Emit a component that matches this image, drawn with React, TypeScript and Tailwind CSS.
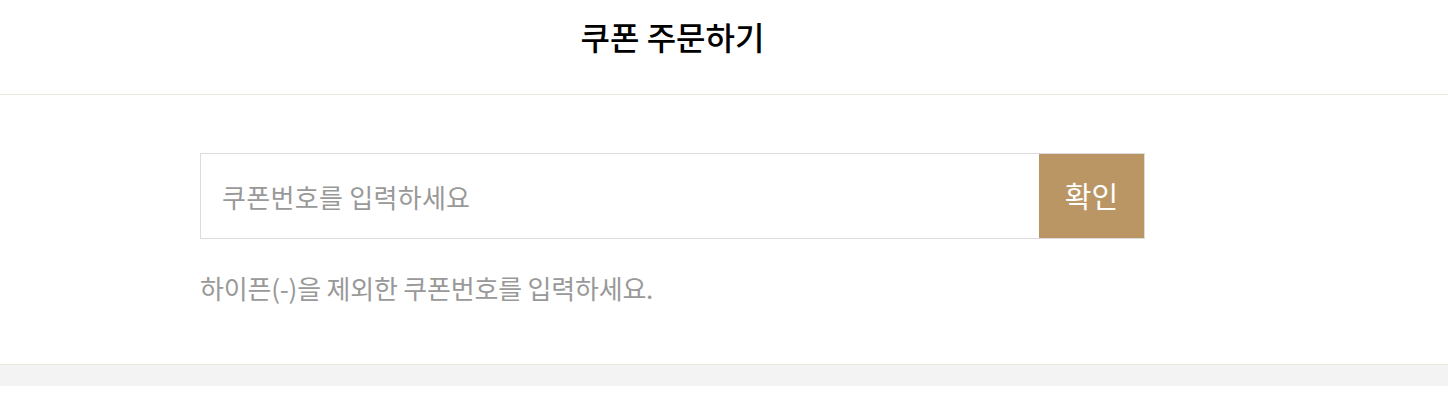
const font = { fontFamily: '"Noto Sans CJK KR", "Noto Sans", sans-serif' };

const App = () => {
  return (
    <div className="w-[1448px] h-[406px] bg-white" style={font}>
      <header className="h-[95px] border-b border-[#ebe7df] flex items-start">
        <div className="ml-[200px] w-[945px] pt-[13px] text-center">
          <h1 className="text-[32px] leading-[46px] font-medium text-black">쿠폰 주문하기</h1>
        </div>
      </header>

      <section className="pt-[58px] h-[269px]">
        <div className="ml-[200px] w-[945px]">
          <div className="flex h-[86px] border border-[#dcdcdc]">
            <input
              type="text"
              placeholder="쿠폰번호를 입력하세요"
              className="flex-1 px-[21px] text-[26px] tracking-[0.3px] outline-none placeholder:text-[#999999] text-[#333]"
            />
            <button
              type="button"
              className="w-[105px] bg-[#ba9665] text-white text-[29px]"
            >
              확인
            </button>
          </div>
          <p className="mt-[29px] text-[26px] leading-[40px] text-[#999999] tracking-[-0.2px]">
            하이픈(-)을 제외한 쿠폰번호를 입력하세요.
          </p>
        </div>
      </section>

      <div className="h-[22px] border-t border-[#ebe7df] bg-[#f3f3f3]" />
    </div>
  );
};

export default App;
